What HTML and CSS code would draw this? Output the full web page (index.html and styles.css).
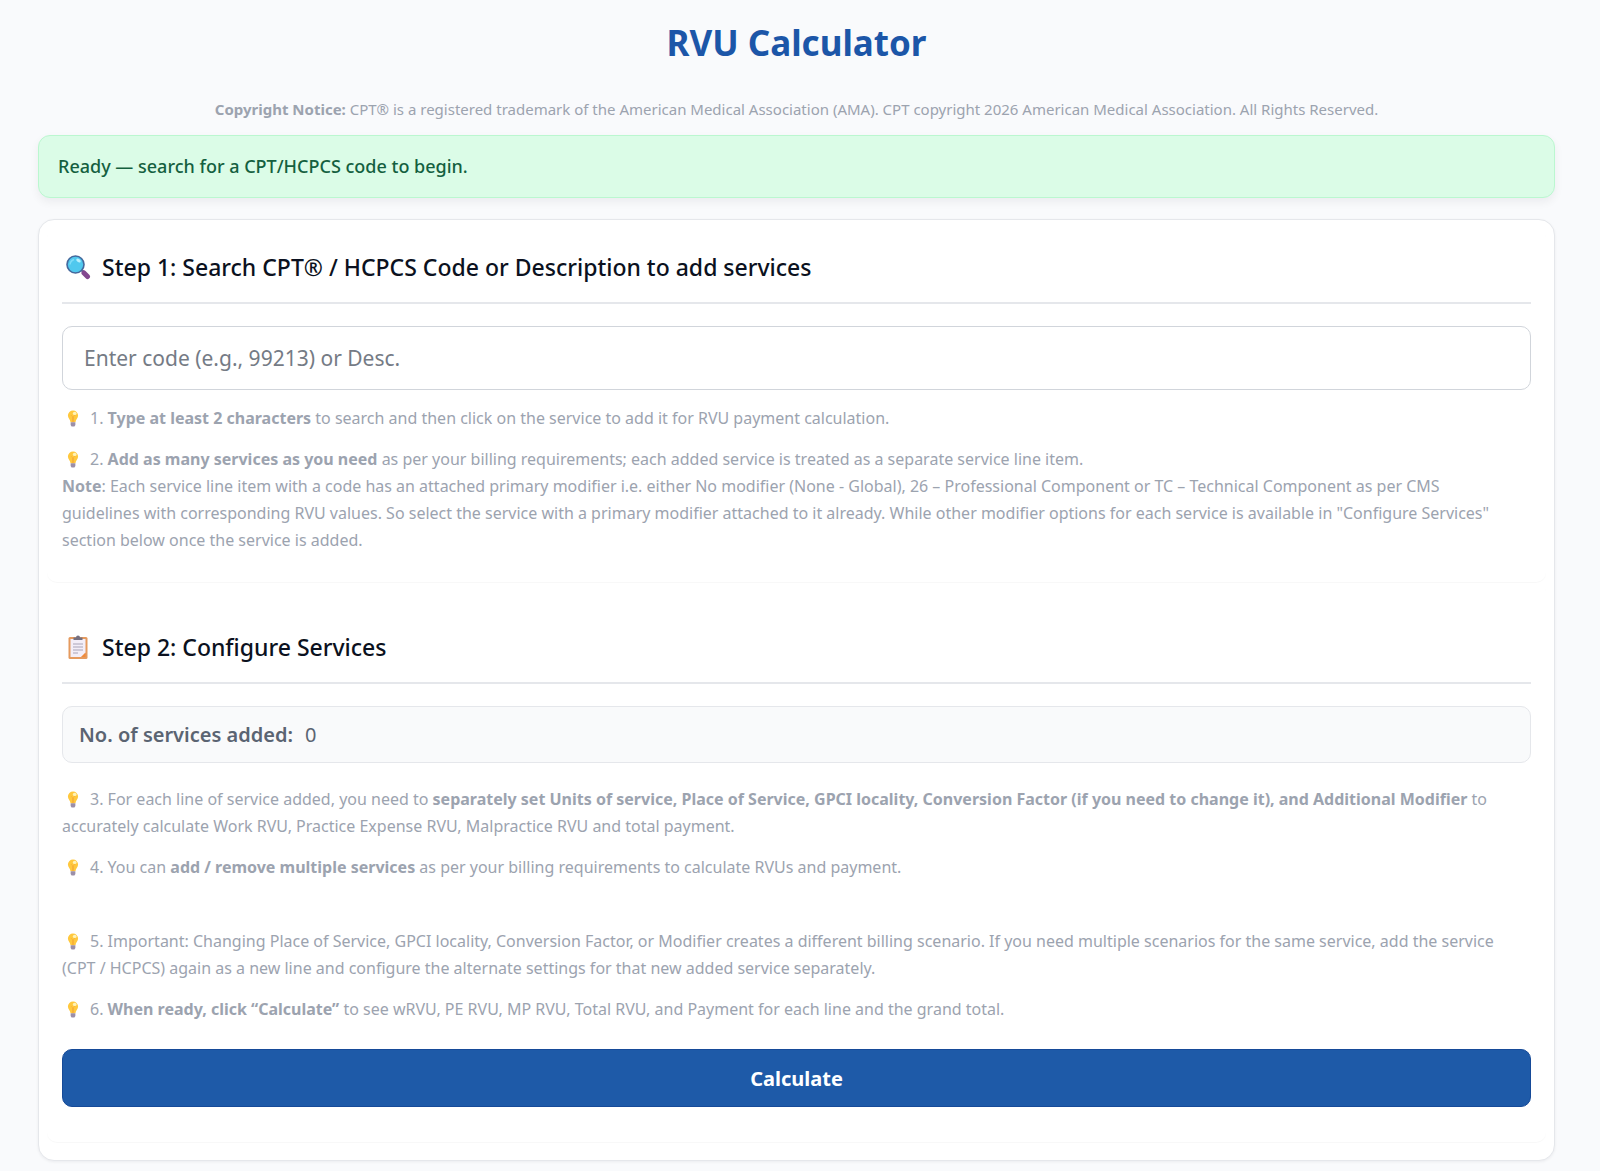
FILE: index.html
```html
<!DOCTYPE html>
<html lang="en">
<head>
<meta charset="utf-8">
<meta name="viewport" content="width=device-width, initial-scale=1">
<title>RVU Calculator</title>
<link rel="stylesheet" href="styles.css">
</head>
<body>
<svg class="sprite" aria-hidden="true">
  <symbol id="bulb" viewBox="0 0 12 18">
    <path d="M6 .5a5.4 5.4 0 0 0-5.4 5.4c0 2.700 2.400 3.900 2.800 7h5.200c.4-3.100 2.800-4.300 2.800-7A5.400 5.400 0 0 0 6 .5z" fill="#ffc83d"/>
    <path d="M4 5.500l1.500 1.500v5.500h1V7L8 5.500" fill="none" stroke="#f8b038" stroke-width="1"/>
    <ellipse cx="7.800" cy="3.600" rx="2" ry="1.700" fill="#fff3b8"/>
    <path d="M3.500 13h5v2.800L7.500 17.500h-3l-1-1.700z" fill="#9b8fa8"/>
  </symbol>
</svg>
<main class="page">
  <h1 class="title">RVU Calculator</h1>
  <p class="copyright"><strong>Copyright Notice:</strong> CPT® is a registered trademark of the American Medical Association (AMA). CPT copyright 2026 American Medical Association. All Rights Reserved.</p>
  <div class="status" role="status">Ready — search for a CPT/HCPCS code to begin.</div>

  <div class="card">
    <section class="step">
      <h2 class="step-title">
        <svg class="step-icon" viewBox="0 0 26 26" aria-hidden="true">
          <path d="M17 16.500l2.500 2.500" stroke="#6a5a8c" stroke-width="2.500"/>
          <path d="M19 19l3.500 3.500" stroke="#83478f" stroke-width="5" stroke-linecap="round"/>
          <circle cx="10.500" cy="10.500" r="8.500" fill="#50c8ee" stroke="#44689c" stroke-width="1.600"/>
          <path d="M5 10.500a6 6 0 0 1 4-5" fill="none" stroke="#7edcf8" stroke-width="1.500"/>
          <ellipse cx="13.500" cy="6.500" rx="2.500" ry="1.600" transform="rotate(35 13.500 6.500)" fill="#b8f0ff"/>
        </svg>
        <span>Step 1: Search CPT® / HCPCS Code or Description to add services</span>
      </h2>
      <input class="search" type="text" aria-label="Search code or description" placeholder="Enter code (e.g., 99213) or Desc.">
      <p class="hint"><svg class="bulb" aria-hidden="true"><use href="#bulb"/></svg>1. <strong>Type at least 2 characters</strong> to search and then click on the service to add it for RVU payment calculation.</p>
      <div class="hint">
        <p><svg class="bulb" aria-hidden="true"><use href="#bulb"/></svg>2. <strong>Add as many services as you need</strong> as per your billing requirements; each added service is treated as a separate service line item.</p>
        <p><strong>Note</strong>: Each service line item with a code has an attached primary modifier i.e. either No modifier (None - Global), 26 – Professional Component or TC – Technical Component as per CMS guidelines with corresponding RVU values. So select the service with a primary modifier attached to it already. While other modifier options for each service is available in "Configure Services" section below once the service is added.</p>
      </div>
    </section>

    <section class="step">
      <h2 class="step-title">
        <svg class="step-icon" viewBox="0 0 26 26" aria-hidden="true">
          <rect x="3.500" y="3" width="19" height="22" rx="1.500" fill="#e59a5e"/>
          <path d="M5.500 5h15v14l-4 4h-11z" fill="#f3eef8"/>
          <path d="M20.500 18.500v4.500H16z" fill="#f08a3c"/>
          <path d="M8.500 6V3.500h2.500a2 2 0 0 1 4 0h2.500V6z" fill="#757080"/>
          <path d="M8 10h10M8 13h10M8 16h10M8 19h5" stroke="#a9a3b8" stroke-width="1.200"/>
        </svg>
        <span>Step 2: Configure Services</span>
      </h2>
      <div class="count"><strong>No. of services added:</strong><output>0</output></div>
      <p class="hint"><svg class="bulb" aria-hidden="true"><use href="#bulb"/></svg>3. For each line of service added, you need to <strong>separately set Units of service, Place of Service, GPCI locality, Conversion Factor (if you need to change it), and Additional Modifier</strong> to accurately calculate Work RVU, Practice Expense RVU, Malpractice RVU and total payment.</p>
      <p class="hint"><svg class="bulb" aria-hidden="true"><use href="#bulb"/></svg>4. You can <strong>add / remove multiple services</strong> as per your billing requirements to calculate RVUs and payment.</p>
      <div class="final">
        <p class="hint"><svg class="bulb" aria-hidden="true"><use href="#bulb"/></svg>5. Important: Changing Place of Service, GPCI locality, Conversion Factor, or Modifier creates a different billing scenario. If you need multiple scenarios for the same service, add the service (CPT / HCPCS) again as a new line and configure the alternate settings for that new added service separately.</p>
        <p class="hint"><svg class="bulb" aria-hidden="true"><use href="#bulb"/></svg>6. <strong>When ready, click “Calculate”</strong> to see wRVU, PE RVU, MP RVU, Total RVU, and Payment for each line and the grand total.</p>
      </div>
      <button class="calculate" type="button">Calculate</button>
    </section>
  </div>
</main>
</body>
</html>
```
FILE: styles.css
```css
* { box-sizing: border-box; }

body {
  margin: 0;
  background: #f9fafc;
  color: #0f172a;
  font-family: "Noto Sans", "Open Sans", sans-serif;
  font-size: 16px;
  line-height: 27px;
}

p { margin: 0; }

.sprite { display: none; }

.page { padding: 16px 45px 10px 38px; }

.title {
  margin: 0;
  color: #1c56a8;
  font-size: 35px;
  font-weight: 700;
  line-height: 54px;
  text-align: center;
}

.copyright {
  margin: 26px 0 12px;
  color: #9ca3af;
  font-size: 15px;
  text-align: center;
}

strong { font-weight: 700; }

.status {
  padding: 17px 19px;
  border: 1px solid #bbf7d0;
  border-radius: 12px;
  background: #dbfce7;
  box-shadow: 0 4px 10px rgba(15, 23, 42, .06);
  color: #14603f;
  font-size: 18px;
  font-weight: 500;
}

.card {
  margin-top: 21px;
  padding: 8px 8px 18px;
  border: 1px solid #e5e7eb;
  border-radius: 16px;
  background: #fff;
  box-shadow: 0 1px 3px rgba(15, 23, 42, .06);
}

.step {
  padding: 16px 15px 28px;
  border-radius: 10px;
  box-shadow: 0 1px 1px rgba(15, 23, 42, .03);
}

.step + .step {
  padding-top: 42px;
  padding-bottom: 35px;
}

.step-title {
  display: flex;
  align-items: center;
  gap: 11px;
  margin: 0 0 22px;
  padding: 5px 3px 17px;
  border-bottom: 2px solid #e5e7eb;
  color: #0b1120;
  font-size: 23px;
  font-weight: 500;
  line-height: 36px;
}

.step-icon { flex: none; width: 26px; height: 26px; }

.search {
  display: block;
  width: 100%;
  height: 64px;
  margin-bottom: 15px;
  padding: 0 21px;
  border: 1px solid #d1d5db;
  border-radius: 10px;
  background: #fff;
  color: #0f172a;
  font: inherit;
  font-size: 21px;
}

.search::placeholder { color: #757b85; opacity: 1; }

.hint {
  padding-right: 20px;
  color: #9ca3af;
}

.hint + .hint { margin-top: 14px; }

.bulb {
  width: 12px;
  height: 17px;
  margin: 0 11px 0 5px;
  vertical-align: -3px;
}

.count {
  display: flex;
  align-items: center;
  gap: 12px;
  margin-bottom: 23px;
  padding: 14px 16px;
  border: 1px solid #e5e7eb;
  border-radius: 10px;
  background: #f9fafb;
  color: #5b6472;
  font-size: 20px;
}

.count strong { font-weight: 600; }

.final { margin: 47px 0 26px; }

.calculate {
  display: block;
  width: 100%;
  height: 58px;
  border: 1px solid #164a98;
  border-radius: 10px;
  background: #1e5aa8;
  color: #fff;
  font: inherit;
  font-size: 20px;
  font-weight: 700;
}
```
